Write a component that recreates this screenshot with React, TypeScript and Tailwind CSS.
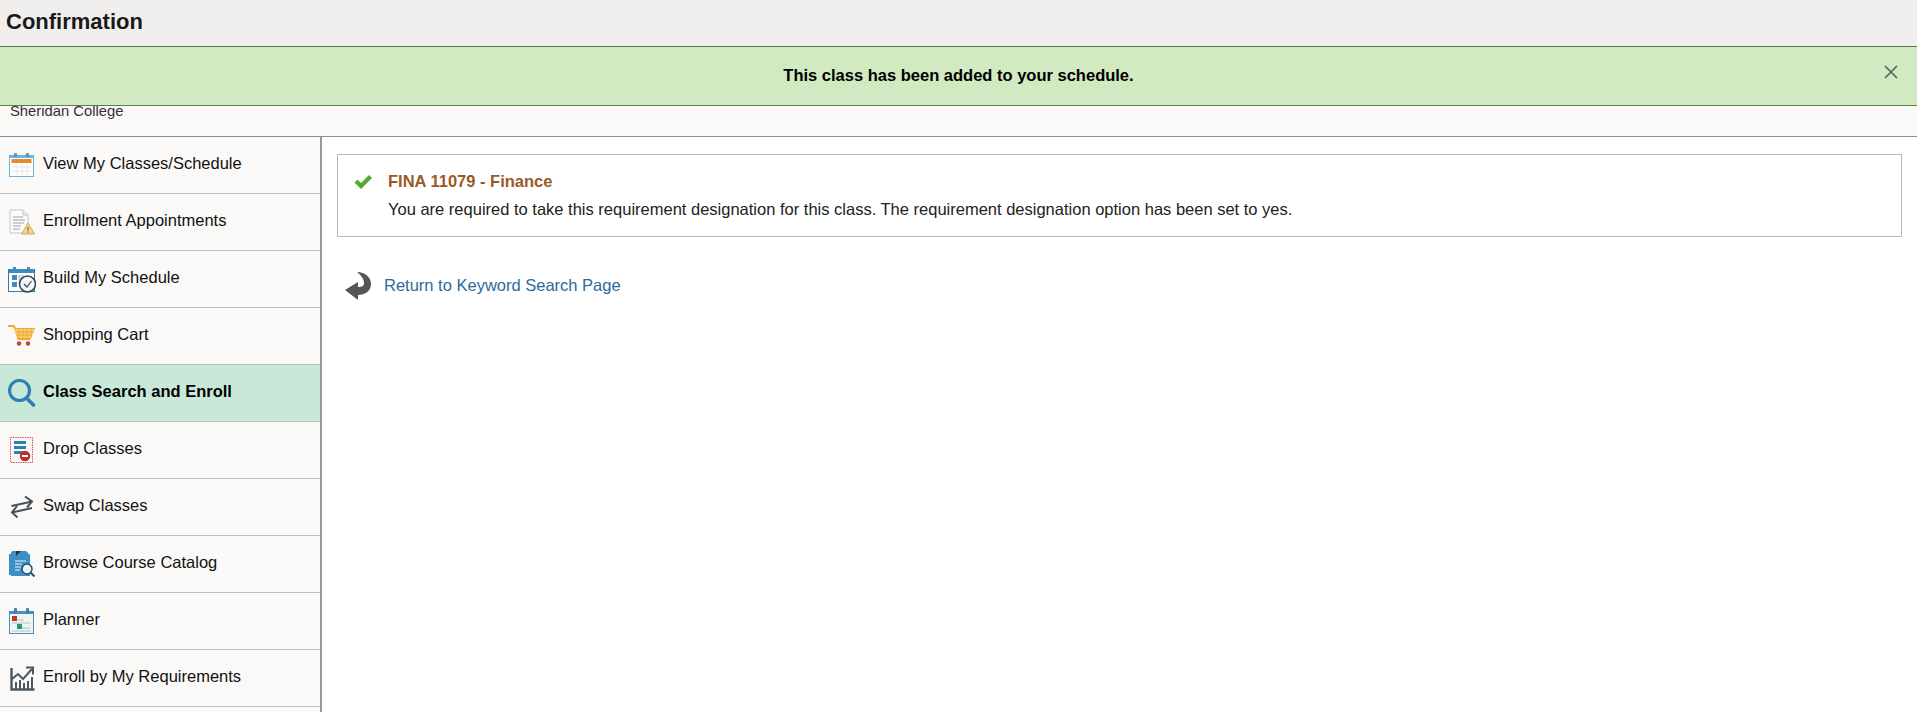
const CalendarIcon = () => (
	<svg width="26" height="26" viewBox="0 0 26 26">
		<rect x="0.5" y="3.5" width="24" height="21" fill="#fff" stroke="#6db3dc" />
		<rect x="1" y="3" width="23" height="3" fill="#6db3dc" />
		<rect x="5" y="1" width="3" height="4" rx="1" fill="#4f97c7" />
		<rect x="17" y="1" width="3" height="4" rx="1" fill="#4f97c7" />
		<rect x="2.5" y="7" width="20" height="4" fill="#e8872c" />
		<path d="M3 15h19M3 19h19M8 12v11M13 12v11M18 12v11" stroke="#e2e6e8" fill="none" />
	</svg>
);

const AppointmentIcon = () => (
	<svg width="26" height="26" viewBox="0 0 26 26">
		<path d="M1 1h13l5 5v18H1z" fill="#fbfbfb" stroke="#c3c6c8" />
		<path d="M14 1v5h5" fill="#e6e7e8" stroke="#c3c6c8" />
		<path d="M4 8h10M4 11h12M4 14h11M4 17h8M4 20h7" stroke="#9a9fa3" fill="none" />
		<path d="M19 14l6.5 11h-13z" fill="#f3d68c" stroke="#c9a95a" />
		<path d="M19 18v3.5M19 22.5v1.2" stroke="#5c5132" fill="none" />
	</svg>
);

const BuildIcon = () => (
	<svg width="28" height="27" viewBox="0 0 28 27">
		<rect x="0.5" y="3.5" width="26" height="22" fill="#fff" stroke="#2f7bad" />
		<rect x="1" y="3" width="25" height="4" fill="#3d8abc" />
		<rect x="5" y="1" width="3" height="4" fill="#3d8abc" />
		<rect x="19" y="1" width="3" height="4" fill="#3d8abc" />
		<rect x="4" y="9" width="5" height="5" fill="#3d8abc" />
		<rect x="4" y="16" width="5" height="5" fill="#3d8abc" />
		<rect x="10" y="9" width="6" height="5" fill="#bcdcef" />
		<circle cx="19.5" cy="18" r="8" fill="#f4f7f8" stroke="#37474f" strokeWidth="1.6" />
		<path d="M16 18l3 3 4.5-6" stroke="#37474f" strokeWidth="1.2" fill="none" />
	</svg>
);

const CartIcon = () => (
	<svg width="28" height="22" viewBox="0 0 28 22">
		<path d="M0 1h6l4.5 13h12" stroke="#f0a92e" strokeWidth="2" fill="none" />
		<path d="M6 4h21l-4 9H10z" fill="#f8cf7c" />
		<path d="M8 7h18M9 10h15M11 4v9M15 4v9M19 4v9M23 4v9" stroke="#f0a92e" fill="none" />
		<path d="M6 3.5h21" stroke="#f0a92e" />
		<circle cx="11" cy="18.5" r="2.2" fill="#c0453a" />
		<circle cx="20" cy="18.5" r="2.2" fill="#c0453a" />
	</svg>
);

const SearchIcon = () => (
	<svg width="28" height="28" viewBox="0 0 28 28">
		<circle cx="11.5" cy="11.5" r="10" fill="none" stroke="#2e7fb3" strokeWidth="3.2" />
		<path d="M18.5 19l7 7" stroke="#2e7fb3" strokeWidth="3.6" strokeLinecap="round" />
	</svg>
);

const DropIcon = () => (
	<svg width="24" height="27" viewBox="0 0 24 27">
		<rect x="0.5" y="0.5" width="22" height="25" fill="#fdf6f4" stroke="#c2554d" strokeDasharray="1.4 1" />
		<rect x="4" y="4" width="12" height="3" fill="#2e7fb3" />
		<rect x="4" y="9" width="12" height="3" fill="#2e7fb3" />
		<rect x="4" y="14" width="12" height="3" fill="#2e7fb3" />
		<circle cx="15" cy="19" r="5.2" fill="#b8322a" />
		<rect x="12" y="18" width="6" height="2" fill="#fff" />
	</svg>
);

const SwapIcon = () => (
	<svg width="24" height="22" viewBox="0 0 24 22">
		<path d="M1.5 10L22 5.5M15 0.5l7 5-5 6" stroke="#46515c" strokeWidth="2" fill="none" />
		<path d="M22 12L2 16.5M7 10l-5 6.5 5.5 5" stroke="#46515c" strokeWidth="2" fill="none" />
	</svg>
);

const CatalogIcon = () => (
	<svg width="28" height="28" viewBox="0 0 28 28">
		<path d="M1 4v21h3V4z" fill="#3f8fc7" />
		<path d="M4 1h14l4 4v21H3V3z" fill="#3f8fc7" />
		<path d="M8 1h5l-5 5z" fill="#26343f" />
		<path d="M7 11h11M7 14h7M7 17h6M7 20h5" stroke="#e3f1fa" strokeWidth="1.2" fill="none" />
		<circle cx="19" cy="19" r="5" fill="#e9f3f9" stroke="#26506e" strokeWidth="1.5" />
		<path d="M22.5 22.5l4 4" stroke="#26506e" strokeWidth="2" />
	</svg>
);

const PlannerIcon = () => (
	<svg width="26" height="27" viewBox="0 0 26 27">
		<rect x="0.5" y="3.5" width="24" height="22" fill="#f1f5f1" stroke="#4c8fbb" />
		<rect x="1" y="3" width="23" height="3" fill="#4c8fbb" />
		<rect x="5" y="0" width="3" height="6" rx="1" fill="#3e81ae" />
		<rect x="17" y="0" width="3" height="6" rx="1" fill="#3e81ae" />
		<rect x="3" y="8" width="5" height="5" fill="#c0352c" />
		<rect x="8" y="16" width="5" height="5" fill="#1f9b7e" />
		<path d="M8 12h7M13 20h8M3 15h19M3 23h19" stroke="#b9bec2" fill="none" />
	</svg>
);

const RequirementsIcon = () => (
	<svg width="25" height="25" viewBox="0 0 25 25">
		<path d="M1.5 2v21.5h23" stroke="#4b5763" strokeWidth="2.4" fill="none" />
		<path d="M6 23v-7M10 23v-9M14 23v-6M18 23v-8M22 23v-12" stroke="#4b5763" strokeWidth="2" fill="none" />
		<path d="M2 13l6-5 5 5 9-10" stroke="#4b5763" strokeWidth="2" fill="none" />
		<path d="M16 1.5h7v7" stroke="#4b5763" strokeWidth="2" fill="none" />
	</svg>
);

const navItems = [
	{ label: "View My Classes/Schedule", icon: <CalendarIcon /> },
	{ label: "Enrollment Appointments", icon: <AppointmentIcon /> },
	{ label: "Build My Schedule", icon: <BuildIcon /> },
	{ label: "Shopping Cart", icon: <CartIcon /> },
	{ label: "Class Search and Enroll", icon: <SearchIcon />, active: true },
	{ label: "Drop Classes", icon: <DropIcon /> },
	{ label: "Swap Classes", icon: <SwapIcon /> },
	{ label: "Browse Course Catalog", icon: <CatalogIcon /> },
	{ label: "Planner", icon: <PlannerIcon /> },
	{ label: "Enroll by My Requirements", icon: <RequirementsIcon /> },
	{ label: "", icon: null },
];

export default function App() {
	return (
		<div className="flex h-[712px] flex-col overflow-hidden bg-white font-['Liberation_Sans',Arial,sans-serif] text-[#111]">
			<header className="flex h-[46px] shrink-0 items-center bg-[#f0efee] px-[6px] pb-[4px] text-[22px] font-bold text-[#1a1a1a]">
				Confirmation
			</header>

			<div className="relative flex h-[60px] shrink-0 items-center justify-center border-y border-[#5c7d4c] bg-[#d1eac1] pb-[2px] text-[16.5px] font-bold text-black">
				This class has been added to your schedule.
				<button className="absolute right-[19px] top-[18px] text-[#55605a]">
					<svg width="14" height="14" viewBox="0 0 14 14" className="block">
						<path d="M1 1l12 12M13 1L1 13" stroke="currentColor" strokeWidth="1.6" fill="none" />
					</svg>
				</button>
			</div>

			<div className="h-[31px] shrink-0 overflow-hidden border-b border-[#8f8f8b] bg-[#faf9f8] pl-[10px]">
				<div className="-mt-[5px] text-[14.8px] leading-[20px] text-[#333]">Sheridan College</div>
			</div>

			<div className="flex min-h-0 flex-1">
				<nav className="w-[322px] shrink-0 border-r-2 border-[#999995] bg-[#faf9f8]">
					{navItems.map((item, i) => (
						<div
							key={i}
							className={`flex h-[57px] items-center border-b border-[#bdbdb9] ${
								item.active ? "bg-[#c8e9d8] font-bold text-black" : ""
							}`}
						>
							<div className="flex w-[44px] shrink-0 justify-center">{item.icon}</div>
							<span className="-ml-[1px] -mt-[4px] text-[16.5px]">{item.label}</span>
						</div>
					))}
				</nav>

				<main className="min-w-0 flex-1 pl-[15px] pr-[15px] pt-[17px]">
					<div className="flex h-[83px] border border-[#b9b9b9] pl-[15px] pt-[16px]">
						<svg width="20" height="18" viewBox="0 0 20 18" className="mr-[15px] mt-[2px] shrink-0">
							<path d="M1.5 9.5l3-3 3.5 3.5L16 2l3 3L8 16z" fill="#56a82f" />
						</svg>
						<div>
							<div className="text-[16.5px] font-bold leading-[20px] text-[#9a5a26]">FINA 11079 - Finance</div>
							<div className="mt-[8px] text-[16.5px] leading-[20px] text-[#222]">
								You are required to take this requirement designation for this class. The requirement designation option has been set to yes.
							</div>
						</div>
					</div>

					<div className="mt-[35px] flex items-center pl-[8px]">
						<svg width="26" height="28" viewBox="0 0 26 28" className="mr-[13px] shrink-0">
							<path
								d="M12 0c8 0 14 5 14 12 0 7-6 11-13 11v5L0 18l13-8v5c4 0 6-1 6-4 0-4-3-8-7-11z"
								fill="#565656"
							/>
						</svg>
						<a className="-mt-[2px] text-[16.5px] text-[#2b6a9e]">Return to Keyword Search Page</a>
					</div>
				</main>
			</div>
		</div>
	);
}
